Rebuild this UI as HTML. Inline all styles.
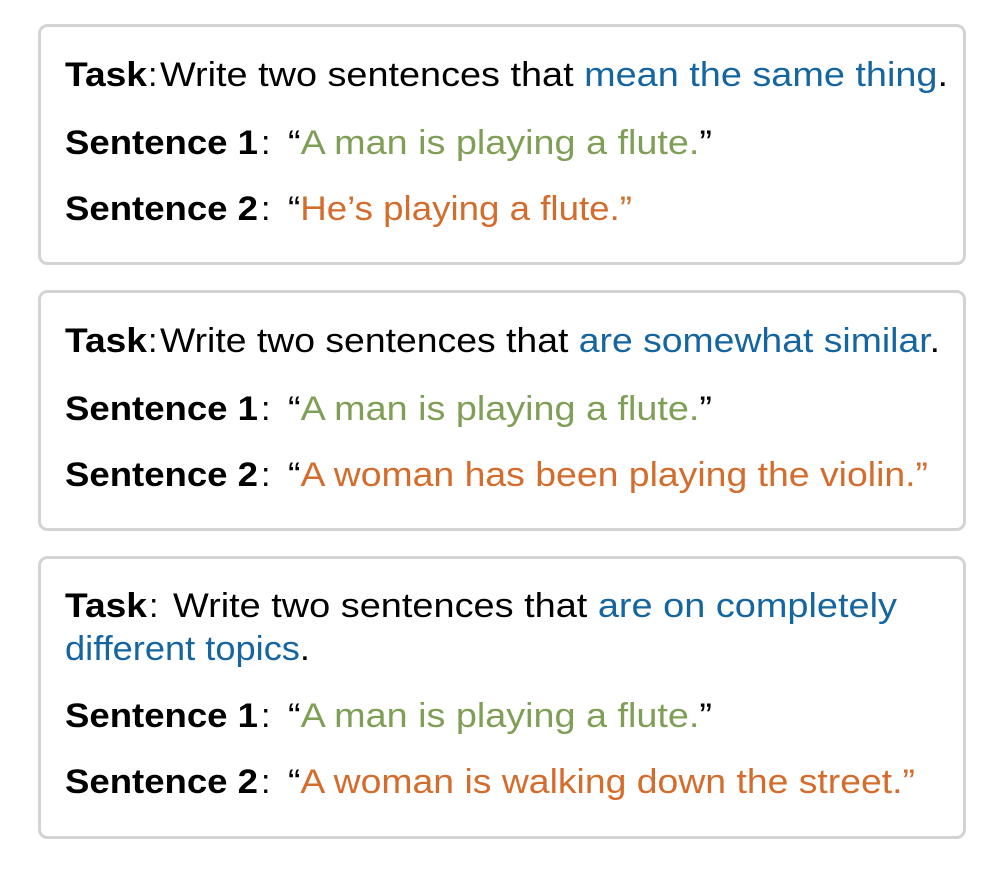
<!DOCTYPE html>
<html><head><meta charset="utf-8"><style>
html,body{margin:0;padding:0;background:#fff;}
svg{display:block;}
text{font-family:"Liberation Sans",Arial,sans-serif;font-size:34px;}
.b{font-weight:bold;fill:#000;}
.k{fill:#000;}
.bl{fill:#1565a0;}
.g{fill:#7f9f56;}
.o{fill:#d46c2c;}
</style></head><body>
<svg width="998" height="870" viewBox="0 0 998 870" xmlns="http://www.w3.org/2000/svg">
<rect x="39.5" y="25.5" width="925" height="238" rx="8" fill="#fff" stroke="#d3d3d3" stroke-width="3"/>
<rect x="39.5" y="291.5" width="925" height="238" rx="8" fill="#fff" stroke="#d3d3d3" stroke-width="3"/>
<rect x="39.5" y="557.5" width="925" height="280" rx="8" fill="#fff" stroke="#d3d3d3" stroke-width="3"/>

<text x="65" y="86" class="b" textLength="82" lengthAdjust="spacingAndGlyphs">Task</text>
<text x="148" y="86" class="k">:</text>
<text x="160" y="86" textLength="788" lengthAdjust="spacingAndGlyphs"><tspan class="k">Write two sentences that </tspan><tspan class="bl">mean the same thing</tspan><tspan class="k">.</tspan></text>
<text x="65" y="154" class="b" textLength="193" lengthAdjust="spacingAndGlyphs">Sentence 1</text>
<text x="261" y="154" class="k">:</text>
<text x="288" y="154" textLength="424" lengthAdjust="spacingAndGlyphs"><tspan class="k">“</tspan><tspan class="g">A man is playing a flute.</tspan><tspan class="k">”</tspan></text>
<text x="65" y="220" class="b" textLength="193" lengthAdjust="spacingAndGlyphs">Sentence 2</text>
<text x="261" y="220" class="k">:</text>
<text x="288" y="220" textLength="344" lengthAdjust="spacingAndGlyphs"><tspan class="k">“</tspan><tspan class="o">He’s playing a flute.”</tspan></text>

<text x="65" y="352" class="b" textLength="82" lengthAdjust="spacingAndGlyphs">Task</text>
<text x="148" y="352" class="k">:</text>
<text x="160" y="352" textLength="780" lengthAdjust="spacingAndGlyphs"><tspan class="k">Write two sentences that </tspan><tspan class="bl">are somewhat similar</tspan><tspan class="k">.</tspan></text>
<text x="65" y="420" class="b" textLength="193" lengthAdjust="spacingAndGlyphs">Sentence 1</text>
<text x="261" y="420" class="k">:</text>
<text x="288" y="420" textLength="424" lengthAdjust="spacingAndGlyphs"><tspan class="k">“</tspan><tspan class="g">A man is playing a flute.</tspan><tspan class="k">”</tspan></text>
<text x="65" y="486" class="b" textLength="193" lengthAdjust="spacingAndGlyphs">Sentence 2</text>
<text x="261" y="486" class="k">:</text>
<text x="288" y="486" textLength="640" lengthAdjust="spacingAndGlyphs"><tspan class="k">“</tspan><tspan class="o">A woman has been playing the violin.”</tspan></text>

<text x="65" y="617" class="b" textLength="82" lengthAdjust="spacingAndGlyphs">Task</text>
<text x="149" y="617" class="k">:</text>
<text x="173" y="617" textLength="724" lengthAdjust="spacingAndGlyphs"><tspan class="k">Write two sentences that </tspan><tspan class="bl">are on completely</tspan></text>
<text x="65" y="660" textLength="245" lengthAdjust="spacingAndGlyphs"><tspan class="bl">different topics</tspan><tspan class="k">.</tspan></text>
<text x="65" y="727" class="b" textLength="193" lengthAdjust="spacingAndGlyphs">Sentence 1</text>
<text x="261" y="727" class="k">:</text>
<text x="288" y="727" textLength="424" lengthAdjust="spacingAndGlyphs"><tspan class="k">“</tspan><tspan class="g">A man is playing a flute.</tspan><tspan class="k">”</tspan></text>
<text x="65" y="793" class="b" textLength="193" lengthAdjust="spacingAndGlyphs">Sentence 2</text>
<text x="261" y="793" class="k">:</text>
<text x="288" y="793" textLength="627" lengthAdjust="spacingAndGlyphs"><tspan class="k">“</tspan><tspan class="o">A woman is walking down the street.”</tspan></text>
</svg>
</body></html>
